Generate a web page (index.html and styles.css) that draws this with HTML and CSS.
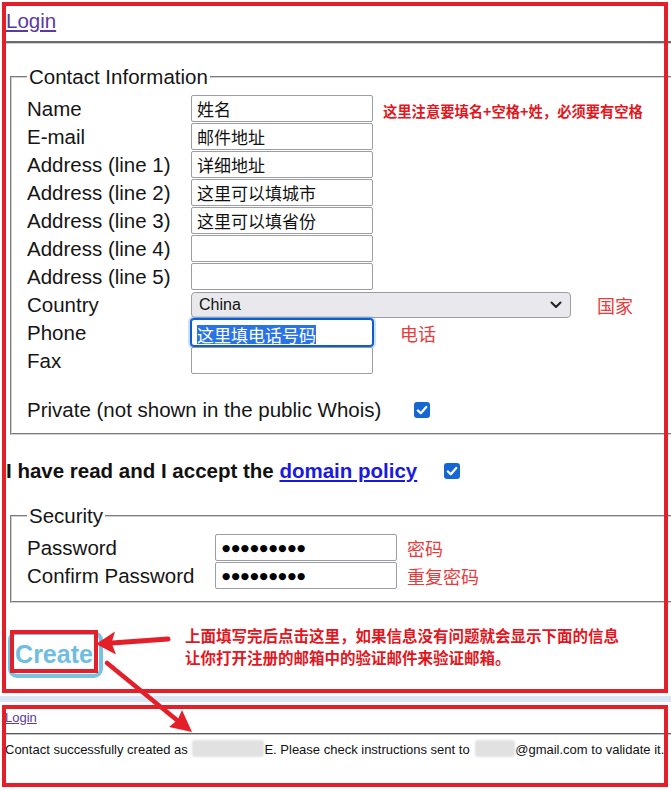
FILE: index.html
```html
<!DOCTYPE html>
<html lang="zh-CN">
<head>
<meta charset="utf-8">
<title>Create Contact</title>
<link rel="stylesheet" href="styles.css">
</head>
<body>
<div class="page">
  <section class="shot shot-top">
    <a class="login" href="#">Login</a>
    <hr class="rule">
    <form class="form">
      <fieldset class="group">
        <legend>Contact Information</legend>
        <div class="rows">
          <div class="row"><span class="lbl">Name</span><span class="field">姓名</span><span class="note-bold">这里注意要填名+空格+姓，必须要有空格</span></div>
          <div class="row"><span class="lbl">E-mail</span><span class="field">邮件地址</span></div>
          <div class="row"><span class="lbl">Address (line 1)</span><span class="field">详细地址</span></div>
          <div class="row"><span class="lbl">Address (line 2)</span><span class="field">这里可以填城市</span></div>
          <div class="row"><span class="lbl">Address (line 3)</span><span class="field">这里可以填省份</span></div>
          <div class="row"><span class="lbl">Address (line 4)</span><span class="field"></span></div>
          <div class="row"><span class="lbl">Address (line 5)</span><span class="field"></span></div>
          <div class="row"><span class="lbl">Country</span>
            <span class="select"><span>China</span>
              <svg class="chev" width="12" height="8" viewBox="0 0 12 8"><path d="M1.5 1.5 L6 6 L10.5 1.5" fill="none" stroke="#222" stroke-width="2" stroke-linecap="round" stroke-linejoin="round"/></svg>
            </span>
            <span class="note note-country">国家</span></div>
          <div class="row"><span class="lbl">Phone</span><span class="field focus"><span class="sel">这里填电话号码</span></span><span class="note note-phone">电话</span></div>
          <div class="row"><span class="lbl">Fax</span><span class="field"></span></div>
        </div>
        <div class="private">
          <span class="private-text">Private (not shown in the public Whois)</span>
          <svg class="check" width="16" height="16" viewBox="0 0 16 16"><rect width="16" height="16" rx="3" fill="#1766d6"/><path d="M3.8 8.4 L6.8 11.3 L12.3 5" fill="none" stroke="#fff" stroke-width="2.2" stroke-linecap="round" stroke-linejoin="round"/></svg>
        </div>
      </fieldset>

      <div class="accept">
        <span>I have read and I accept the <a class="policy" href="#">domain policy</a></span>
        <svg class="check check-accept" width="16" height="16" viewBox="0 0 16 16"><rect width="16" height="16" rx="3" fill="#1766d6"/><path d="M3.8 8.4 L6.8 11.3 L12.3 5" fill="none" stroke="#fff" stroke-width="2.2" stroke-linecap="round" stroke-linejoin="round"/></svg>
      </div>

      <fieldset class="group group-sec">
        <legend>Security</legend>
        <div class="rows">
          <div class="row"><span class="lbl lbl-sec">Password</span><span class="field pw">●●●●●●●●●</span><span class="note">密码</span></div>
          <div class="row"><span class="lbl lbl-sec">Confirm Password</span><span class="field pw">●●●●●●●●●</span><span class="note">重复密码</span></div>
        </div>
      </fieldset>

      <div class="actions">
        <span class="create-wrap"><span class="btn-create">Create</span></span>
        <p class="note-bold note-create">上面填写完后点击这里，如果信息没有问题就会显示下面的信息<br>让你打开注册的邮箱中的验证邮件来验证邮箱。</p>
      </div>
    </form>
  </section>

  <div class="strip"></div>

  <section class="shot shot-bottom">
    <a class="login login-sm" href="#">Login</a>
    <hr class="rule rule-sm">
    <p class="msg">Contact successfully created as <span class="blur b1"></span>E. Please check instructions sent to <span class="blur b2"></span>@gmail.com to validate it.</p>
  </section>

  <svg class="arrows" width="671" height="791" viewBox="0 0 671 791">
    <line x1="168" y1="639" x2="112" y2="643" stroke="#e3202a" stroke-width="5" stroke-linecap="round"/>
    <polygon points="96,644 115,631.5 111.5,643 116,654.5" fill="#e3202a"/>
    <line x1="107" y1="663" x2="178" y2="721" stroke="#e3202a" stroke-width="4.5" stroke-linecap="round"/>
    <polygon points="192,732 169,727 177.5,720 182,710" fill="#e3202a"/>
  </svg>
</div>
</body>
</html>
```
FILE: styles.css
```css
* { box-sizing: border-box; }
html, body { margin: 0; padding: 0; background: #fff; }
body {
  font-family: "Liberation Sans", Arial, "Noto Sans CJK SC", sans-serif;
  color: #151515;
}
.page {
  position: relative;
  width: 671px;
  height: 791px;
  overflow: hidden;
  background: #fff;
}

/* annotated screenshot frames */
.shot {
  position: relative;
  margin: 0 3px 0 2px;
  padding: 4px;
}
.shot::after {
  content: "";
  position: absolute;
  inset: 0;
  border: 4px solid #e3202a;
  pointer-events: none;
  z-index: 2;
}
.shot-top { margin-top: 2px; height: 691px; }
.shot-bottom { height: 82px; }

.strip {
  height: 12px;
  background: linear-gradient(#fff 0 3px, #dbe6f4 3px 9px, #fff 9px);
}

.login {
  display: block;
  width: max-content;
  color: #5b3a9e;
  font-size: 20.5px;
  line-height: 23px;
  margin-top: 3px;
}
.rule {
  margin: 9px -8px 0 0;
  height: 0;
  border: 0;
  border-top: 2px solid #6b6b6b;
  border-bottom: 1px solid #cfcfcf;
}

.form { margin: 0; }

.group {
  margin: 21px -20px 0 4px;
  padding: 7px 15px 12px;
  border: 2px groove #d0d0d0;
  min-width: 0;
}
.group legend {
  padding: 0 2px;
  font-size: 20.5px;
  line-height: 23px;
}
.rows { display: flex; flex-direction: column; gap: 1px; }
.row {
  display: flex;
  align-items: center;
  height: 27px;
  font-size: 20.5px;
}
.lbl { width: 164px; flex: none; line-height: 27px; white-space: nowrap; }
.lbl-sec { width: 188px; }

.field {
  flex: none;
  width: 182px;
  height: 27px;
  border: 1px solid #9c9ca4;
  border-radius: 2px;
  padding: 0 5px;
  background: #fff;
  font-family: "Noto Sans CJK SC", sans-serif;
  font-size: 17px;
  line-height: 25px;
  color: #111;
  white-space: nowrap;
  overflow: hidden;
}
.field.focus {
  border-color: #0f5bd0;
  border-radius: 3px;
  box-shadow: 0 0 0 1px #0f5bd0, 0 0 0 3px rgba(110, 165, 240, 0.35);
  overflow: visible;
}
.sel {
  display: inline-block;
  line-height: 19px;
  background: #2a73e6;
  color: #fff;
  vertical-align: middle;
  margin-top: -2px;
}
.pw {
  font-family: "DejaVu Sans", sans-serif;
  font-size: 9.5px;
  letter-spacing: 1.1px;
  line-height: 25px;
  padding-left: 6px;
  color: #000;
}

.select {
  flex: none;
  display: flex;
  align-items: center;
  justify-content: space-between;
  width: 380px;
  height: 26px;
  padding: 0 8px 0 7px;
  border: 1px solid #9c9ca4;
  border-radius: 4px;
  background: #e9e9ed;
  font-size: 16px;
  color: #111;
}
.chev { display: block; }

.note {
  font-family: "Noto Sans CJK SC", sans-serif;
  font-size: 18px;
  color: #e53c3c;
  margin-left: 10px;
  white-space: nowrap;
}
.note-country { margin-left: 26px; }
.note-phone { margin-left: 27px; }
.note-bold {
  font-family: "Noto Sans CJK SC", sans-serif;
  font-weight: bold;
  font-size: 14.3px;
  color: #e3161e;
  margin-left: 10px;
  margin-top: 3px;
  white-space: nowrap;
}

.private {
  display: flex;
  align-items: center;
  margin-top: 24px;
  font-size: 20.5px;
  line-height: 23px;
}
.check { display: block; flex: none; }
.private .check { margin-left: 33px; }

.accept {
  display: flex;
  align-items: center;
  margin-top: 24px;
  font-size: 20.5px;
  line-height: 23px;
  font-weight: bold;
  color: #111;
  white-space: nowrap;
}
.policy { color: #1a1adf; }
.check-accept { margin-left: 27px; }

.group-sec { margin-top: 22px; }

.actions {
  display: flex;
  align-items: flex-start;
  margin: 28px 0 0 2px;
}
.create-wrap {
  position: relative;
  display: block;
  flex: none;
}
.create-wrap::after {
  content: "";
  position: absolute;
  inset: -1px 5px 5px 2px;
  border: 4px solid #e3202a;
  z-index: 2;
}
.btn-create {
  display: block;
  width: 95px;
  height: 47px;
  border: 4px solid #78c2e4;
  border-radius: 9px;
  background: #fff;
  color: #6fbde2;
  font-size: 25px;
  font-weight: bold;
  line-height: 39px;
  text-align: center;
  padding-right: 3px;
}
.note-create {
  margin: -7px 0 0 82px;
  font-size: 15.5px;
  line-height: 22px;
}

.login-sm {
  font-size: 13px;
  line-height: 16px;
  margin: 1px 0 0 -1px;
}
.rule-sm {
  margin: 7px -8px 0 -1px;
  border-top: 1px solid #5a5a5a;
  border-bottom: 1px solid #c4c4c4;
}
.msg {
  margin: 5px 0 0 -1px;
  font-size: 13px;
  line-height: 16px;
  white-space: nowrap;
  color: #111;
}
.blur {
  display: inline-block;
  vertical-align: -3px;
  height: 17px;
  background: #e1e1e1;
  border-radius: 3px;
  filter: blur(1.2px);
}
.b1 { width: 72px; margin-left: 1px; }
.b2 { width: 40px; margin-left: 2px; }

.arrows {
  position: absolute;
  left: 0;
  top: 0;
  pointer-events: none;
  z-index: 3;
}
```
